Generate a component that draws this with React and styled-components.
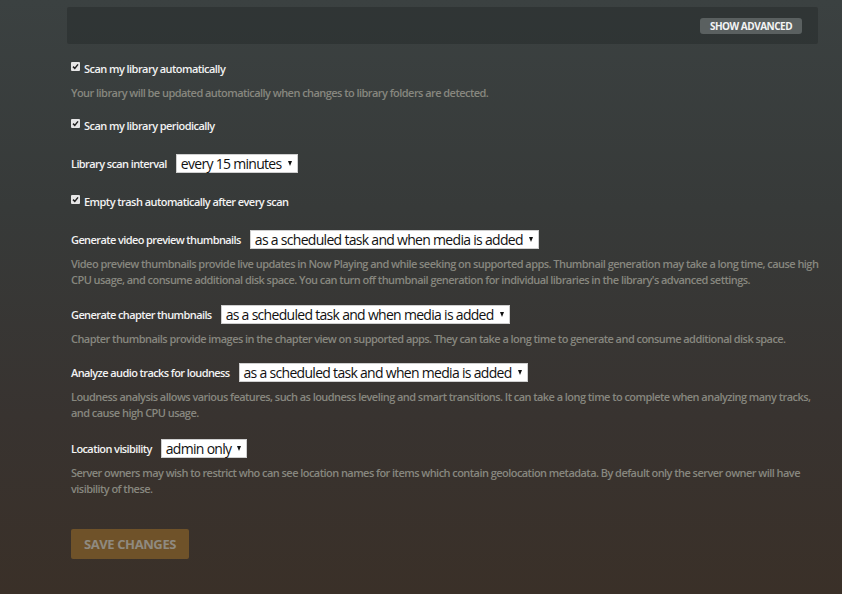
import React from "react";
import styled, { createGlobalStyle } from "styled-components";

const Global = createGlobalStyle`
  html, body { margin: 0; padding: 0; }
  body {
    font-family: "Open Sans", "Noto Sans", sans-serif;
    background: #383a39;
  }
`;

const STRETCH = "90%";

const Page = styled.div`
  width: 842px;
  min-height: 594px;
  box-sizing: border-box;
  padding: 7px 24px 30px 67px;
  background: linear-gradient(180deg, #3b4141 0%, #373a39 35%, #383330 70%, #3a3028 100%);
  font-stretch: ${STRETCH};
`;

const TopBar = styled.div`
  height: 37px;
  background: rgba(20, 24, 24, 0.28);
  display: flex;
  align-items: center;
  justify-content: flex-end;
  padding-right: 16px;
  border-radius: 2px;
`;

const AdvancedButton = styled.button`
  height: 16px;
  width: 102px;
  border: none;
  border-radius: 3px;
  background: #5a6060;
  color: #f4f4f4;
  font-family: inherit;
  font-stretch: ${STRETCH};
  font-weight: 700;
  font-size: 10px;
  letter-spacing: -0.5px;
  text-transform: uppercase;
  padding: 0;
  cursor: pointer;
`;

const Form = styled.div`
  padding: 14px 0 0 4px;
  margin-right: -14px;
  display: flex;
  flex-direction: column;
`;

const Field = styled.div`
  margin-bottom: ${(p) => p.$gap}px;
`;

const Row = styled.div`
  height: 20px;
  display: flex;
  align-items: center;
  gap: 9px;
`;

const CheckLabel = styled.label`
  display: flex;
  align-items: center;
  gap: 4px;
  color: #f2f2f2;
  font-size: 11px;
  font-weight: 600;
  letter-spacing: -0.55px;
`;

const Box = styled.span`
  width: 9px;
  height: 9px;
  background: #e6e6e6;
  border-radius: 1px;
  display: inline-flex;
  align-items: center;
  justify-content: center;
  margin-top: -4px;
`;

const Label = styled.span`
  color: #f2f2f2;
  font-size: 11px;
  font-weight: 600;
  letter-spacing: -0.6px;
`;

const Select = styled.div`
  height: 19px;
  box-sizing: border-box;
  background: #fff;
  border: 1px solid #cfcfcf;
  display: flex;
  align-items: center;
  padding: 0 5px 0 4px;
  gap: 6px;
  color: #111;
  font-size: 14px;
  font-weight: 400;
  letter-spacing: -0.7px;
  white-space: nowrap;
`;

const Arrow = styled.span`
  width: 0;
  height: 0;
  border-left: 2.5px solid transparent;
  border-right: 2.5px solid transparent;
  border-top: 5px solid #111;
`;

const Help = styled.p`
  margin: 7px 0 0;
  color: #87877f;
  font-size: 11px;
  font-weight: 600;
  letter-spacing: -0.55px;
  line-height: 16px;
  max-width: 756px;
`;

const SaveButton = styled.button`
  margin-top: 16px;
  align-self: flex-start;
  width: 118px;
  height: 30px;
  border: none;
  border-radius: 2px;
  background: #6f5229;
  color: #8f8a80;
  font-family: inherit;
  font-stretch: ${STRETCH};
  font-weight: 700;
  font-size: 13px;
  letter-spacing: -0.4px;
  text-transform: uppercase;
  padding: 0;
`;

const Check = () => (
  <Box>
    <svg width="7" height="7" viewBox="0 0 7 7">
      <path d="M1 3.6 L2.8 5.4 L6 1.4" fill="none" stroke="#222" strokeWidth="1.5" />
    </svg>
  </Box>
);

const Dropdown = ({ value }) => (
  <Select>
    <span>{value}</span>
    <Arrow />
  </Select>
);

const CheckField = ({ label, help, gap = 18 }) => (
  <Field $gap={gap}>
    <Row>
      <CheckLabel>
        <Check />
        {label}
      </CheckLabel>
    </Row>
    {help && <Help>{help}</Help>}
  </Field>
);

const SelectField = ({ label, value, help, gap = 16 }) => (
  <Field $gap={gap}>
    <Row>
      <Label>{label}</Label>
      <Dropdown value={value} />
    </Row>
    {help && <Help>{help}</Help>}
  </Field>
);

const SCHED = "as a scheduled task and when media is added";

export default function App() {
  return (
    <Page>
      <Global />
      <TopBar>
        <AdvancedButton>Show Advanced</AdvancedButton>
      </TopBar>
      <Form>
        <CheckField
          gap={14}
          label="Scan my library automatically"
          help="Your library will be updated automatically when changes to library folders are detected."
        />
        <CheckField label="Scan my library periodically" />
        <SelectField gap={18} label="Library scan interval" value="every 15 minutes" />
        <CheckField label="Empty trash automatically after every scan" />
        <SelectField
          label="Generate video preview thumbnails"
          value={SCHED}
          help="Video preview thumbnails provide live updates in Now Playing and while seeking on supported apps. Thumbnail generation may take a long time, cause high CPU usage, and consume additional disk space. You can turn off thumbnail generation for individual libraries in the library's advanced settings."
        />
        <SelectField
          gap={15}
          label="Generate chapter thumbnails"
          value={SCHED}
          help="Chapter thumbnails provide images in the chapter view on supported apps. They can take a long time to generate and consume additional disk space."
        />
        <SelectField
          gap={17}
          label="Analyze audio tracks for loudness"
          value={SCHED}
          help="Loudness analysis allows various features, such as loudness leveling and smart transitions. It can take a long time to complete when analyzing many tracks, and cause high CPU usage."
        />
        <SelectField
          label="Location visibility"
          value="admin only"
          help="Server owners may wish to restrict who can see location names for items which contain geolocation metadata. By default only the server owner will have visibility of these."
        />
        <SaveButton>Save Changes</SaveButton>
      </Form>
    </Page>
  );
}
